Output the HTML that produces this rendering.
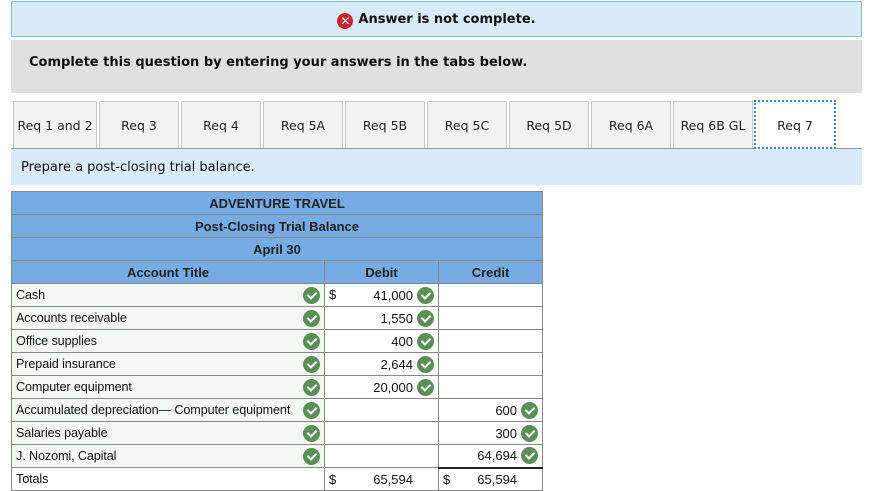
<!DOCTYPE html>
<html><head><style>
*{margin:0;padding:0;box-sizing:border-box}
body{width:890px;height:487px;background:#fff;font-family:"DejaVu Sans",Verdana,sans-serif;position:relative;overflow:hidden;color:#111}
.top{position:absolute;left:11px;top:1px;width:851px;height:36px;background:#d9ebf9;border:1px solid #92b8da;text-align:center;font-size:13px;font-weight:bold;line-height:35px}
.x{display:inline-block;width:16px;height:16px;border-radius:50%;background:#c9252c;color:#fff;font-size:12px;line-height:16px;vertical-align:-2px;margin-right:5px}
.gray{position:absolute;left:11px;top:40px;width:851px;height:53px;background:#e0e0e0;font-size:13px;font-weight:bold;padding-left:18px;line-height:45px}
.tab{position:absolute;top:101px;height:47px;background:#f2f2f2;border:1px solid #c8c8c8;border-bottom:none;font-size:12.5px;text-align:center;line-height:48px;color:#222}
.tabline{position:absolute;left:11px;top:148px;width:851px;height:1px;background:#999}
.band{position:absolute;left:11px;top:149px;width:851px;height:36px;background:#d9ebf9;font-size:13px;line-height:37px;padding-left:10px}
table{position:absolute;left:11px;top:191px;border-collapse:collapse;font-family:"Liberation Sans",Arial,sans-serif;font-size:13px;table-layout:fixed;width:531px}
td{border:1px solid #888;height:23px;padding:0 4px;white-space:nowrap;overflow:visible}
.h td{background:#76abe4;text-align:center;font-weight:bold;color:#222}
.t{background:#f5f7f5;position:relative;font-size:12.6px;letter-spacing:-0.1px}
.d{text-align:right;position:relative}
.c{text-align:right;position:relative}
.ck{display:inline-block;width:17px;height:17px;border-radius:50%;background:#5b8f57;vertical-align:-4px;position:relative}
.ck:after{content:"";position:absolute;left:6px;top:3px;width:4px;height:7px;border:solid #fff;border-width:0 2px 2px 0;transform:rotate(45deg)}
.t .ck{position:absolute;right:4px;top:3px}
.d .ck,.c .ck{margin-left:4px}
.dol{position:absolute;left:4px}
</style></head><body>
<div class="top"><span class="x">✕</span>Answer is not complete.</div>
<div class="gray">Complete this question by entering your answers in the tabs below.</div>
<div class="tab" style="left:13px;width:84px">Req 1 and 2</div>
<div class="tab" style="left:99px;width:80px">Req 3</div>
<div class="tab" style="left:181px;width:80px">Req 4</div>
<div class="tab" style="left:263px;width:80px">Req 5A</div>
<div class="tab" style="left:345px;width:80px">Req 5B</div>
<div class="tab" style="left:427px;width:80px">Req 5C</div>
<div class="tab" style="left:509px;width:80px">Req 5D</div>
<div class="tab" style="left:591px;width:80px">Req 6A</div>
<div class="tab" style="left:673px;width:80px">Req 6B GL</div>
<div class="tabline"></div>
<div class="tab" style="left:754px;width:82px;background:#fff;border:2px dotted #4a7fc0;height:49px;top:100px;z-index:2">Req 7</div>
<div class="band">Prepare a post-closing trial balance.</div>
<table>
<colgroup><col style="width:313px"><col style="width:114px"><col style="width:104px"></colgroup>
<tr class="h"><td colspan="3">ADVENTURE TRAVEL</td></tr>
<tr class="h"><td colspan="3">Post-Closing Trial Balance</td></tr>
<tr class="h"><td colspan="3">April 30</td></tr>
<tr class="h"><td>Account Title</td><td>Debit</td><td>Credit</td></tr>
<tr><td class="t">Cash<span class="ck"></span></td><td class="d"><span class="dol">$</span>41,000<span class="ck"></span></td><td class="c"></td></tr>
<tr><td class="t">Accounts receivable<span class="ck"></span></td><td class="d">1,550<span class="ck"></span></td><td class="c"></td></tr>
<tr><td class="t">Office supplies<span class="ck"></span></td><td class="d">400<span class="ck"></span></td><td class="c"></td></tr>
<tr><td class="t">Prepaid insurance<span class="ck"></span></td><td class="d">2,644<span class="ck"></span></td><td class="c"></td></tr>
<tr><td class="t">Computer equipment<span class="ck"></span></td><td class="d">20,000<span class="ck"></span></td><td class="c"></td></tr>
<tr><td class="t">Accumulated depreciation— Computer equipment<span class="ck"></span></td><td class="d"></td><td class="c">600<span class="ck"></span></td></tr>
<tr><td class="t">Salaries payable<span class="ck"></span></td><td class="d"></td><td class="c">300<span class="ck"></span></td></tr>
<tr><td class="t">J. Nozomi, Capital<span class="ck"></span></td><td class="d"></td><td class="c">64,694<span class="ck"></span></td></tr>
<tr><td class="t" style="background:#fff">Totals</td><td class="d" style="padding-right:25px"><span class="dol">$</span>65,594</td><td class="c" style="padding-right:25px;border-top:2px solid #222"><span class="dol">$</span>65,594</td></tr>
</table>
</body></html>
